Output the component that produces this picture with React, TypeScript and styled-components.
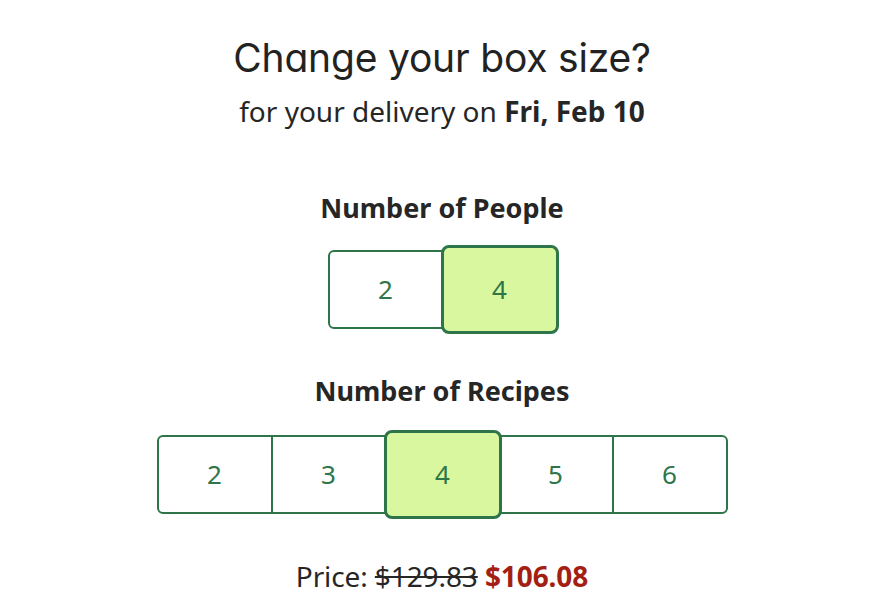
import React, { useState } from 'react'
import styled, { createGlobalStyle } from 'styled-components'

const GREEN = '#2e7549'

const GlobalStyle = createGlobalStyle`
  html, body {
    margin: 0;
    background: #ffffff;
  }
  body {
    font-family: 'Noto Sans', 'Open Sans', sans-serif;
    color: #242424;
  }
`

const Page = styled.div`
  display: flex;
  flex-direction: column;
  align-items: center;
  padding-top: 33px;
`

const Title = styled.h1`
  margin: 0;
  font-family: Inter, 'DejaVu Sans', sans-serif;
  font-feature-settings: 'cv11' 1;
  font-weight: 400;
  font-size: 39px;
  line-height: 50px;
  letter-spacing: -0.2px;
  color: #222222;
`

const Subtitle = styled.p`
  margin: 10px 0 0;
  font-size: 28px;
  line-height: 36px;
  letter-spacing: 0;
  color: #262626;

  strong {
    font-weight: 700;
  }
`

const GroupLabel = styled.h2<{ $top: number }>`
  margin: ${props => props.$top}px 0 0;
  font-size: 27px;
  line-height: 36px;
  letter-spacing: 0;
  font-weight: 700;
  color: #262626;
`

const Segmented = styled.div<{ $top: number }>`
  display: flex;
  align-items: center;
  height: 90px;
  margin-top: ${props => props.$top}px;
`

const Segment = styled.button<{ $selected: boolean }>`
  box-sizing: border-box;
  width: ${props => (props.$selected ? 118 : 116)}px;
  height: ${props => (props.$selected ? 89 : 79)}px;
  margin-left: ${props => (props.$selected ? -3 : -2)}px;
  margin-right: ${props => (props.$selected ? -2 : 0)}px;
  position: relative;
  z-index: ${props => (props.$selected ? 2 : 1)};
  border: ${props => (props.$selected ? 3 : 2)}px solid ${GREEN};
  border-radius: ${props => (props.$selected ? 8 : 0)}px;
  background: ${props => (props.$selected ? '#d9f79e' : '#ffffff')};
  color: ${GREEN};
  font-family: 'Noto Sans', 'Open Sans', sans-serif;
  font-size: 26px;
  padding: 0;
  cursor: pointer;

  &:first-child {
    margin-left: 0;
    border-top-left-radius: ${props => (props.$selected ? 8 : 6)}px;
    border-bottom-left-radius: ${props => (props.$selected ? 8 : 6)}px;
  }

  &:last-child {
    border-top-right-radius: ${props => (props.$selected ? 8 : 6)}px;
    border-bottom-right-radius: ${props => (props.$selected ? 8 : 6)}px;
  }
`

const Price = styled.p`
  margin: 39px 0 0;
  font-size: 28px;
  line-height: 36px;
  letter-spacing: -0.1px;
  color: #262626;
`

const OldPrice = styled.span`
  text-decoration: line-through;
  text-decoration-thickness: 1.5px;
`

const NewPrice = styled.strong`
  color: #a31f14;
  font-weight: 700;
`

interface SelectorProps {
  options: number[]
  value: number
  onChange: (v: number) => void
  top: number
}

const Selector: React.FC<SelectorProps> = ({ options, value, onChange, top }) => (
  <Segmented $top={top}>
    {options.map(o => (
      <Segment key={o} $selected={o === value} onClick={() => onChange(o)}>
        {o}
      </Segment>
    ))}
  </Segmented>
)

const App: React.FC = () => {
  const [people, setPeople] = useState(4)
  const [recipes, setRecipes] = useState(4)

  return (
    <Page>
      <GlobalStyle />
      <Title>Change your box size?</Title>
      <Subtitle>
        for your delivery on <strong>Fri, Feb 10</strong>
      </Subtitle>
      <GroupLabel $top={61}>Number of People</GroupLabel>
      <Selector options={[2, 4]} value={people} onChange={setPeople} top={18} />
      <GroupLabel $top={39}>Number of Recipes</GroupLabel>
      <Selector options={[2, 3, 4, 5, 6]} value={recipes} onChange={setRecipes} top={20} />
      <Price>
        Price: <OldPrice>$129.83</OldPrice> <NewPrice>$106.08</NewPrice>
      </Price>
    </Page>
  )
}

export default App
